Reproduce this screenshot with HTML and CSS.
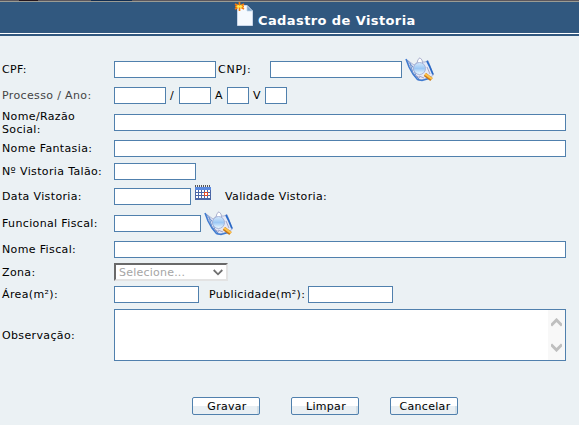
FILE: index.html
```html
<!DOCTYPE html>
<html lang="pt-BR">
<head>
<meta charset="utf-8">
<title>Cadastro de Vistoria</title>
<link rel="stylesheet" href="styles.css">
</head>
<body>
<svg width="0" height="0" class="defs">
  <defs>
    <linearGradient id="ball" x1="0" y1="0" x2="0" y2="1"><stop offset="0" stop-color="#d4e8fb"/><stop offset=".5" stop-color="#9cc8f5"/><stop offset="1" stop-color="#effaff"/></linearGradient>
    <symbol id="search" viewBox="0 0 30 26">
      <path d="M1.5 2.5 L9 8 L13 5 L20 5 L23 3.5 L28.5 18 L24 21 L14 23.5 L10 20Z" fill="#e5e9f6" stroke="#9aa6cf" stroke-width=".8"/>
      <path d="M1 2 L4 10 L8 17 L12.500 22.500 L17 23.500 L24 21.500" fill="none" stroke="#3f7bd0" stroke-width="1.500"/>
      <path d="M22 4 L24.500 9 L28 17.500" fill="none" stroke="#2869c7" stroke-width="1.800"/>
      <path d="M2 3 L8 10 L11 19 M5 6 L8 16 L14 22" fill="none" stroke="#6a91ce" stroke-width="1"/>
      <path d="M11.500 8 L13 2.500 L15 .8 L17 3 L18 8Z" fill="#fff" stroke="#a3a8c8" stroke-width=".9"/>
      <path d="M14 19 L19 21 M10 18 L15 21 M22 10 L25 17" stroke="#a5a6ca"/>
      <circle cx="14.500" cy="11.500" r="6" fill="url(#ball)" stroke="#a6b4d8"/>
      <path d="M20 17.500 L26.500 22.500" stroke="#c77718" stroke-width="4"/>
      <path d="M20 16.800 L27 21.800" stroke="#ffc34b" stroke-width="2.200"/>
    </symbol>
  </defs>
</svg>
<header class="title">
  <svg class="page-icon" width="20" height="26" viewBox="0 0 20 26">
    <path d="M3.500 4.500 H13 L18.500 10 V24.500 H3.500Z" fill="#f5f9fe" stroke="#c9d6e8"/>
    <path d="M13 4.500 V10 H18.500Z" fill="#7fa5ca" stroke="#c0d4ea" stroke-width=".7"/>
    <path d="M1 3 L10 8 M10 3 L1 8 M5.500 1 V10 M1 5.500 H10" stroke="#f77b09" stroke-width="1.700"/>
    <path d="M3.500 4 L7.500 7 M7.500 4 L3.500 7 M2.500 5.500 H8.500" stroke="#ffe94d" stroke-width="1.200"/>
  </svg>
  <h1>Cadastro de Vistoria</h1>
</header>
<form class="form">
  <div class="row r27"><label>CPF:</label><input class="w102"><span class="cnpj">CNPJ:</span><input class="w132"><svg class="search"><use href="#search"/></svg></div>
  <div class="row r25"><label class="soft">Processo / Ano:</label><input class="w52"><span class="sep slash">/</span><input class="w32"><span class="sep">A</span><input class="w22"><span class="sep">V</span><input class="w22"></div>
  <div class="row r29"><label>Nome/Razão<br>Social:</label><input class="wide"></div>
  <div class="row r23"><label>Nome Fantasia:</label><input class="wide"></div>
  <div class="row r23"><label>Nº Vistoria Talão:</label><input class="w82"></div>
  <div class="row r27"><label>Data Vistoria:</label><input class="w77">
    <svg class="calendar" width="16" height="16" viewBox="0 0 16 16" shape-rendering="crispEdges">
      <rect y="2" width="16" height="13" fill="#4b67a6"/><rect y="2" width="16" height="3" fill="#5b8ae0"/>
      <path d="M0 1 H16" stroke="#555" stroke-width="2" stroke-dasharray="1 1"/>
      <path d="M1 6 H15 M1 9 H15 M1 12 H15" stroke="#fff" stroke-width="2" stroke-dasharray="2 1"/>
      <rect x="9.500" y="7.500" width="3" height="3" fill="#fff" stroke="#e64b25"/>
    </svg><span class="validade">Validade Vistoria:</span></div>
  <div class="row r27"><label>Funcional Fiscal:</label><input class="w87"><svg class="search"><use href="#search"/></svg></div>
  <div class="row r25"><label>Nome Fiscal:</label><input class="wide"></div>
  <div class="row r20"><label>Zona:</label><div class="select"><span>Selecione...</span><svg width="10" height="7" viewBox="0 0 10 7"><path d="M.7 1 L5 5.300 L9.300 1" fill="none" stroke="#707070" stroke-width="1.800"/></svg></div></div>
  <div class="row r25"><label>Área(m²):</label><input class="w85"><span class="pub">Publicidade(m²):</span><input class="w85"></div>
  <div class="row r56"><label>Observação:</label><div class="area"><div class="scroll">
    <svg width="11" height="9" viewBox="0 0 11 9"><path d="M0 7.500 L5.500 2 L11 7.500" fill="none" stroke="#bfbfbf" stroke-width="3"/></svg>
    <svg width="11" height="9" viewBox="0 0 11 9"><path d="M0 1.500 L5.500 7 L11 1.500" fill="none" stroke="#bfbfbf" stroke-width="3"/></svg>
  </div></div></div>
  <div class="buttons"><button type="button">Gravar</button><button type="button">Limpar</button><button type="button">Cancelar</button></div>
</form>
</body>
</html>
```
FILE: styles.css
```css
* { box-sizing: border-box; }
body { margin: 0; height: 425px; overflow: hidden; background: #ebf1f4; color: #000; font: 11px/13px "DejaVu Sans", Verdana, sans-serif; letter-spacing: .36px; }
.defs { position: absolute; }
.title { height: 36px; display: flex; align-items: flex-start; padding: 1px 0 0 234px; background: linear-gradient(90deg, transparent 19px, #24151c 19px 38px, transparent 38px 91px, #102c50 91px 132px, transparent 132px) top / 100% 1px no-repeat, linear-gradient(#5b565c 0 1px, #9b9c94 1px 2px, #31587f 2px 33px, #fff 33px 34px, #31587f 34px); }
.page-icon { flex: none; }
h1 { margin: 12px 0 0 4px; font-size: 13px; line-height: 16px; color: #fff; white-space: nowrap; letter-spacing: .4px; }
.form { padding-top: 20px; }
.row { display: flex; align-items: center; padding-left: 2px; white-space: nowrap; }
.row label { flex: none; width: 112px; }
.row .soft { color: #444; }
.r20 { height: 20px; }
.r23 { height: 23px; }
.r25 { height: 25px; }
.r27 { height: 27px; }
.r29 { height: 29px; }
.r56 { height: 56px; }
input { flex: none; height: 17px; margin: 0; padding: 0 2px; border: 1px solid #5080ad; border-radius: 0; background: #fff; font: inherit; outline: 0; }
.w22 { width: 22px; }
.w32 { width: 32px; }
.w52 { width: 52px; }
.w77 { width: 77px; }
.w82 { width: 82px; }
.w85 { width: 85px; }
.w87 { width: 87px; }
.w102 { width: 102px; }
.w132 { width: 132px; }
.wide { width: 452px; }
.cnpj { width: 54px; padding-left: 2px; letter-spacing: .8px; }
.sep { width: 16px; padding-left: 4px; }
.slash { width: 13px; }
.search { flex: none; width: 30px; height: 26px; margin-left: 3px; }
.calendar { flex: none; margin: 0 0 7px 4px; }
.validade { margin-left: 14px; }
.pub { width: 109px; padding-left: 10px; }
.select { display: flex; align-items: center; justify-content: space-between; width: 114px; height: 18px; padding: 0 3px; border: 2px solid; border-color: #696969 #e3e3e3 #e3e3e3 #696969; background: #fff; color: #a5a5a5; letter-spacing: .22px; }
.area { display: flex; justify-content: flex-end; width: 452px; height: 52px; border: 1px solid #5080ad; background: #fff; }
.scroll { display: flex; flex-direction: column; justify-content: space-between; align-items: center; width: 17px; padding: 8px 0; background: #f8f8f8; }
.buttons { display: flex; gap: 31px; padding: 34px 0 0 192px; }
button { width: 68px; height: 18px; margin: 0; padding: 0 0 0 2px; border: 1px solid #5080ad; border-radius: 2px; background: linear-gradient(#d3e0e8, #d3e0e8) right bottom / 2px 8px no-repeat, linear-gradient(#fff 0 50%, #e9eff3 50%); color: #000; font: inherit; letter-spacing: .3px; }
```
